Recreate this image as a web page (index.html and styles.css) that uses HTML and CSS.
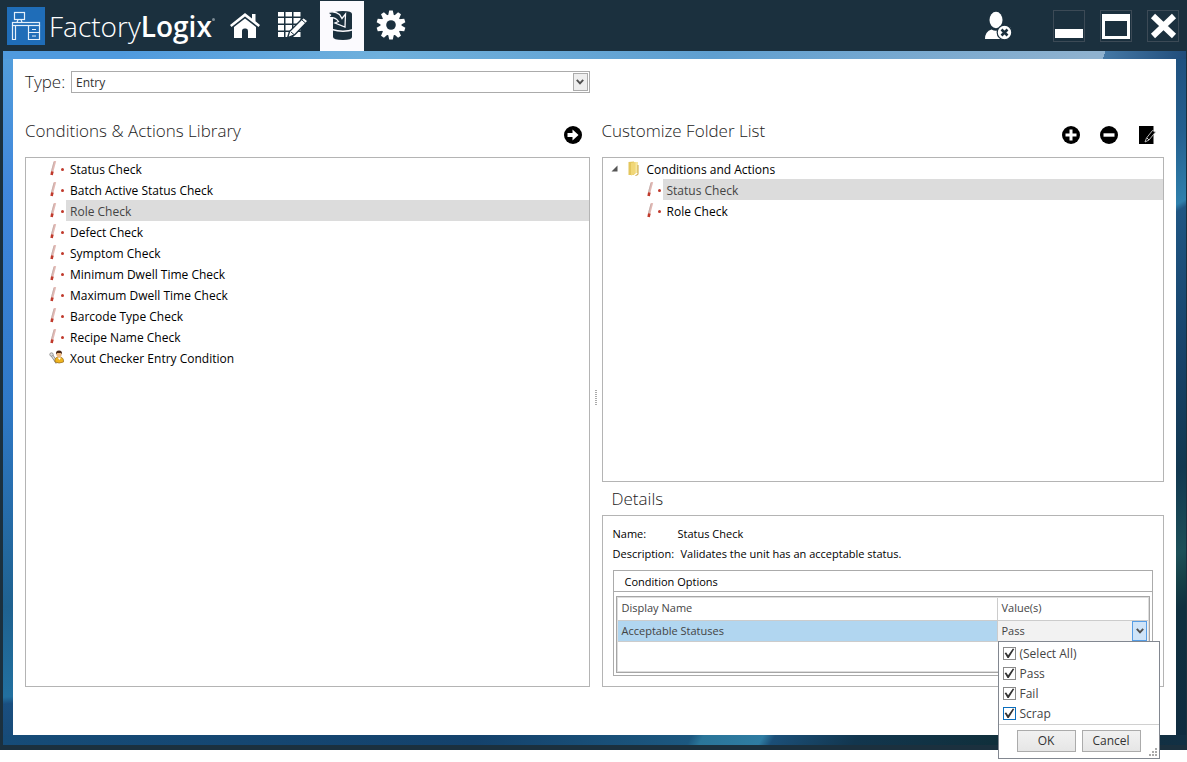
FILE: index.html
```html
<!DOCTYPE html>
<html lang="en">

<head>

    <meta charset="utf-8">
    <meta name="viewport" content="width=device-width, initial-scale=1.0">

    <title>FactoryLogix</title>

    <link rel="stylesheet" href="styles.css">

</head>

<body>

    <!-- shared icons -->
    <svg width="0" height="0" class="defs">
        <symbol id="check-icon" viewBox="0 0 16 16">
            <path d="M6 0L2.8 12" stroke="#e3b9b4" stroke-width="2.4"/>
            <path d="M5 1L2.5 10" stroke="#b9aaa8" stroke-width=".7"/>
            <path d="M3.4 10.500L2.600 14" stroke="#c0392b" stroke-width="2.6"/>
            <circle cx="13.5" cy="8.500" r="1.5" fill="#c0392b"/>
        </symbol>
        <symbol id="arrow-down" viewBox="0 0 8 6">
            <path d="M.8 .8L4 4.4L7.2 .8" fill="none" stroke="#505050" stroke-width="1.9"/>
        </symbol>
    </svg>

    <div class="app">

        <header class="topbar">
            <svg class="logo" viewBox="0 0 38 38">
                <rect width="38" height="38" fill="#1f6db8"/>
                <g fill="none" stroke="#e4f0fa" stroke-width="1.2">
                    <rect x="7.5" y="5.5" width="10" height="7"/>
                    <path d="M11 12.5L10 15.500H15L14 12.500"/>
                    <rect x="5.500" y="15.500" width="27" height="3"/>
                    <path d="M5.500 18.500V32.500H8.500V18.500M21.500 18.500V32.500H32.500V18.500M21.500 25.500H32.500"/>
                    <path d="M25 22.500H29M25 29H29"/>
                </g>
            </svg>
            <span class="brand">Factory<b>Logix</b><i></i></span>

            <nav class="tabs">
                <button type="button" class="tab" aria-label="Home">
                    <svg width="32" height="32" viewBox="0 0 32 32" fill="#fff">
                        <path d="M17 4L2 16L3.500 18L17 7.500L30.500 18L32 16L27.500 12.300V5H24V9.500Z"/>
                        <path d="M17 9.500L6 18V29H14V22Q14 19.500 16.500 19.500H18Q20 19.500 20 22V29H28V18Z"/>
                    </svg>
                </button>
                <button type="button" class="tab" aria-label="Edit table">
                    <svg width="32" height="32" viewBox="0 0 32 32">
                        <g fill="#fff">
                            <path d="M1 3H7V7.500H1ZM8.500 3H15V7.500H8.500ZM16.500 3H23.500V7.500H16.500Z"/>
                            <path d="M1 9H7V14.500H1ZM8.500 9H15V14.500H8.500ZM16.500 9H23.500V14.500H16.500Z"/>
                            <path d="M1 16H7V21.500H1ZM8.500 16H15V21.500H8.500ZM16.500 16H23.500V21.500H16.500Z"/>
                            <path d="M1 23H7V28H1ZM8.500 23H15V28H8.500ZM16.500 23H23.500V28H16.500Z"/>
                        </g>
                        <path d="M26.500 8.500L31 12L17.500 26L10.500 29L12.500 22.500Z" fill="#fff" stroke="#1b303e" stroke-width="1.4"/>
                        <path d="M25 11L28.500 14M14 23L17 25.500" stroke="#1b303e" stroke-width="1"/>
                    </svg>
                </button>
                <button type="button" class="tab active" aria-label="Library">
                    <svg width="32" height="32" viewBox="0 0 32 32">
                        <path d="M7 5Q7 2 17 2Q26 2 26 5V28Q26 31 17 31Q7 31 7 28Z" fill="#1b303e"/>
                        <path d="M6 20.500Q17 24 28 20.500" fill="none" stroke="#fbfafe" stroke-width="1.600"/>
                        <path d="M1.500 3.500Q9 1.500 13.500 5.500L16 9.500L19.500 5L19 18L9 14L12.500 12.500Q9.500 8 2.500 8.500L4.500 6Z" fill="#1b303e" stroke="#fbfafe" stroke-width="1.300"/>
                    </svg>
                </button>
                <button type="button" class="tab" aria-label="Settings">
                    <svg width="32" height="32" viewBox="-16 -16 32 32">
                        <g fill="#fff">
                            <circle r="10.500"/>
                            <path d="M-3 -9L-1.800 -14.500H1.800L3 -9ZM-3 9L-1.800 14.500H1.800L3 9Z"/>
                            <path d="M-3 -9L-1.800 -14.500H1.800L3 -9ZM-3 9L-1.800 14.500H1.800L3 9Z" transform="rotate(36)"/>
                            <path d="M-3 -9L-1.800 -14.500H1.800L3 -9ZM-3 9L-1.800 14.500H1.800L3 9Z" transform="rotate(72)"/>
                            <path d="M-3 -9L-1.800 -14.500H1.800L3 -9ZM-3 9L-1.800 14.500H1.800L3 9Z" transform="rotate(108)"/>
                            <path d="M-3 -9L-1.800 -14.500H1.800L3 -9ZM-3 9L-1.800 14.500H1.800L3 9Z" transform="rotate(144)"/>
                        </g>
                        <circle r="4.800" fill="#1b303e"/>
                    </svg>
                </button>
            </nav>

            <button type="button" class="user" aria-label="Log out">
                <svg width="28" height="30" viewBox="0 0 28 30">
                    <ellipse cx="11" cy="9" rx="6.500" ry="8.300" fill="#fff"/>
                    <path d="M0 28Q0 20.500 6.500 18.500Q11 21 15 18.500L20 28Z" fill="#fff"/>
                    <circle cx="19.500" cy="21.500" r="7.300" fill="#fff" stroke="#1b303e" stroke-width="1.200"/>
                    <path d="M16.500 18.500L22.500 24.500M22.500 18.500L16.500 24.500" stroke="#1b303e" stroke-width="2.600"/>
                </svg>
            </button>
            <div class="window-buttons">
                <button type="button" aria-label="Minimize">
                    <svg viewBox="0 0 30 30"><rect x="1" y="18" width="28" height="9" fill="#fff"/></svg>
                </button>
                <button type="button" aria-label="Maximize">
                    <svg viewBox="0 0 30 30"><path d="M1 3H29V28H1ZM4 10V25H26V10Z" fill="#fff" fill-rule="evenodd"/></svg>
                </button>
                <button type="button" aria-label="Close">
                    <svg viewBox="0 0 30 30"><path d="M5 5L26 25M26 5L5 25" stroke="#fff" stroke-width="6"/></svg>
                </button>
            </div>
        </header>

        <div class="desktop">
            <main class="page">

                <div class="type-row">
                    <label for="type">Type:</label>
                    <div class="select-box">
                        <select id="type">
                            <option>Entry</option>
                            <option>Exit</option>
                        </select>
                        <span class="select-arrow"><svg width="8" height="6"><use href="#arrow-down"/></svg></span>
                    </div>
                </div>

                <div class="columns">

                    <section class="library">
                        <div class="section-head">
                            <h2>Conditions &amp; Actions Library</h2>
                            <button type="button" class="round" aria-label="Add to folder">
                                <svg viewBox="0 0 18 18"><circle cx="9" cy="9" r="9"/><path d="M3.500 7H8.500V3.500L14.500 9L8.500 14.500V11H3.500Z" fill="#fff"/></svg>
                            </button>
                        </div>
                        <ul class="tree box">
                            <li><svg><use href="#check-icon"/></svg><span>Status Check</span></li>
                            <li><svg><use href="#check-icon"/></svg><span>Batch Active Status Check</span></li>
                            <li class="selected"><svg><use href="#check-icon"/></svg><span>Role Check</span></li>
                            <li><svg><use href="#check-icon"/></svg><span>Defect Check</span></li>
                            <li><svg><use href="#check-icon"/></svg><span>Symptom Check</span></li>
                            <li><svg><use href="#check-icon"/></svg><span>Minimum Dwell Time Check</span></li>
                            <li><svg><use href="#check-icon"/></svg><span>Maximum Dwell Time Check</span></li>
                            <li><svg><use href="#check-icon"/></svg><span>Barcode Type Check</span></li>
                            <li><svg><use href="#check-icon"/></svg><span>Recipe Name Check</span></li>
                            <li>
                                <svg viewBox="0 0 16 16">
                                    <path d="M2 4L8 13" stroke="#8d8d8d" stroke-width="2.800"/>
                                    <path d="M2 4L8 13" stroke="#e6e6e6" stroke-width="1.200"/>
                                    <circle cx="2.500" cy="4.500" r="1.700" fill="#ddd" stroke="#888" stroke-width=".8"/>
                                    <path d="M6 12Q5 7 10 7Q15 7 14.500 12Q10 14 6 12Z" fill="#f0b51f" stroke="#93691a" stroke-width=".7"/>
                                    <path d="M8.500 7.500L10.500 10L12 7.500Z" fill="#fff"/>
                                    <circle cx="10" cy="4.500" r="2.600" fill="#edb77e"/>
                                    <path d="M7 4.500Q6.500 .5 10 .5Q13.500 .5 13 4.500L12 3H8.200Z" fill="#4a2817"/>
                                </svg>
                                <span>Xout Checker Entry Condition</span>
                            </li>
                        </ul>
                    </section>

                    <div class="splitter"><span></span></div>

                    <section class="folders">
                        <div class="section-head">
                            <h2>Customize Folder List</h2>
                            <div class="tools">
                                <button type="button" class="round" aria-label="Add">
                                    <svg viewBox="0 0 18 18"><circle cx="9" cy="9" r="9"/><path d="M9 3.500V14.500M3.500 9H14.500" stroke="#fff" stroke-width="3"/></svg>
                                </button>
                                <button type="button" class="round" aria-label="Remove">
                                    <svg viewBox="0 0 18 18"><circle cx="9" cy="9" r="9"/><path d="M3.500 9H14.500" stroke="#fff" stroke-width="3.400"/></svg>
                                </button>
                                <button type="button" class="round" aria-label="Edit">
                                    <svg viewBox="0 0 18 18"><path d="M1 0H15.500V18H1Z"/><path d="M14.500 4.500L17.500 6L11 14L7 16L8.500 12Z" stroke="#ccc" stroke-width=".9"/><path d="M9 12L11 14" stroke="#ccc"/></svg>
                                </button>
                            </div>
                        </div>
                        <ul class="tree folder-tree box">
                            <li class="root">
                                <svg class="expander" viewBox="0 0 7 7"><path d="M6.500 .5V6.500H.5Z" fill="#555"/></svg>
                                <svg viewBox="0 0 16 16">
                                    <path d="M2.500 1L8 .5V14H2.500Z" fill="#e3c65d"/>
                                    <path d="M8 1H12V12H8Z" fill="#f6e6a1"/>
                                    <path d="M5 2L9.500 1V13L5 14.500Z" fill="#f1d778"/>
                                    <path d="M12 4V13.500L9.500 14.500" fill="none" stroke="#c9a33c"/>
                                </svg>
                                <span>Conditions and Actions</span>
                            </li>
                            <li class="selected"><svg><use href="#check-icon"/></svg><span>Status Check</span></li>
                            <li><svg><use href="#check-icon"/></svg><span>Role Check</span></li>
                        </ul>

                        <h2 class="details-title">Details</h2>
                        <div class="details box">
                            <dl>
                                <dt>Name:</dt><dd>Status Check</dd>
                                <dt>Description:</dt><dd>Validates the unit has an acceptable status.</dd>
                            </dl>
                            <div class="options">
                                <h3>Condition Options</h3>
                                <div class="grid">
                                    <table>
                                        <thead>
                                            <tr><th>Display Name</th><th class="value">Value(s)</th></tr>
                                        </thead>
                                        <tbody>
                                            <tr>
                                                <td>Acceptable Statuses</td>
                                                <td class="value">
                                                    <div class="editor">
                                                        <span>Pass</span>
                                                        <button type="button" class="drop" aria-label="Open list"><svg width="8" height="6"><use href="#arrow-down"/></svg></button>
                                                        <form class="popup">
                                                            <label><input type="checkbox" checked>(Select All)</label>
                                                            <label><input type="checkbox" checked>Pass</label>
                                                            <label><input type="checkbox" checked>Fail</label>
                                                            <label><input type="checkbox" class="focused" checked>Scrap</label>
                                                            <div class="popup-buttons">
                                                                <button type="button">OK</button>
                                                                <button type="button">Cancel</button>
                                                                <svg class="grip" viewBox="0 0 8 8" fill="#aaa"><path d="M6 0H8V2H6ZM3 3H5V5H3ZM6 3H8V5H6ZM0 6H2V8H0ZM3 6H5V8H3ZM6 6H8V8H6Z"/></svg>
                                                            </div>
                                                        </form>
                                                    </div>
                                                </td>
                                            </tr>
                                        </tbody>
                                    </table>
                                </div>
                            </div>
                        </div>
                    </section>

                </div>

            </main>
        </div>

    </div>

</body>

</html>
```

FILE: styles.css
```css
* {
    box-sizing: border-box;
}

body {
    font-family: "Open Sans", "Noto Sans", sans-serif;
    font-size: 12px;
    color: #000;
    background-color: #fff;
    min-height: 100vh;
    margin: 0;
    padding-bottom: 12px;
}

button {
    font-family: inherit;
    padding: 0;
    border: none;
    background: none;
    cursor: pointer;
}

svg {
    display: block;
    flex: none;
}

h2 {
    font-size: 17px;
    font-weight: 300;
    line-height: 24px;
    color: #222;
    margin: 0;
}

.defs {
    position: absolute;
}

.app {
    display: flex;
    flex-direction: column;
    min-height: calc(100vh - 12px);
    padding: 0 1px 5px 3px;
    background-color: #1b303e;
}

/* top bar */
.topbar {
    display: flex;
    align-items: center;
    height: 51px;
    padding: 0 7px 0 4px;
}

.logo {
    width: 38px;
    height: 38px;
}

.brand {
    position: relative;
    width: 171px;
    margin-left: 4px;
    font-size: 28px;
    font-weight: 300;
    line-height: 36px;
    color: #fff;
    white-space: nowrap;
}

.brand b {
    font-weight: 600;
}

.brand i {
    position: absolute;
    top: 10px;
    right: 5px;
    width: 3px;
    height: 3px;
    border-radius: 50%;
    background-color: #7d8b95;
}

.tabs {
    display: flex;
    align-self: stretch;
    gap: 5px;
    padding-top: 1px;
    margin-left: 2px;
}

.tab {
    display: flex;
    align-items: center;
    justify-content: center;
    width: 44px;
}

.tab svg {
    margin-bottom: 3px;
}

.tab.active {
    background-color: #fbfafe;
}

.user {
    margin-left: auto;
}

.window-buttons {
    display: flex;
    gap: 15px;
    margin-left: 40px;
}

.window-buttons button {
    width: 32px;
    height: 32px;
    border: 1px solid #3c4a56;
}

/* wallpaper seen around the page */
.desktop {
    flex: 1;
    display: flex;
    padding: 8px 10px 10px;
    background:
        linear-gradient(105deg, #4f9ade, #4f9ade 10%, #6fb0dc 32%, #5f9fd0 60%, #8fb2cf 92%, #8fb2cf 93%, #4478a5 93%, #204c7a) top / 100% 8px no-repeat,
        linear-gradient(120deg, #164c78, #14426c 40%, #1c5880 58%, #2a7599 59%, #2f7ca2 64%, #1b4f78 65%, #12364e 72%, #102f3b 84%, #123044) bottom / 100% 10px no-repeat,
        linear-gradient(175deg, #539fdc, #3f86dc 20%, #2f79c8 50%, #1f6290 80%, #22709f 93%, #1a4f80 94%, #174a76) left / 10px 100% no-repeat,
        linear-gradient(150deg, #1f4f7d, #24608f 12%, #2f80ac 22%, #1f5683 23%, #174268 45%, #123850 60%, #1d5058 72%, #164047 76%, #10303f 80%, #0f2c40) right / 10px 100% no-repeat;
}

.page {
    flex: 1;
    display: flex;
    flex-direction: column;
    min-width: 0;
    padding: 12px 12px 48px;
    background-color: #fff;
}

.type-row {
    display: flex;
    align-items: center;
    width: calc(50% - 5px);
    height: 22px;
}

.type-row label {
    width: 46px;
    font-size: 17px;
    font-weight: 300;
    line-height: 22px;
    color: #222;
}

.select-box {
    position: relative;
    flex: 1;
}

.select-box select {
    display: block;
    width: 100%;
    height: 22px;
    padding: 0 4px;
    appearance: none;
    border: 1px solid #ababab;
    border-radius: 0;
    background-color: #fff;
    font-family: inherit;
    font-size: 12px;
    color: #333;
}

.select-arrow {
    position: absolute;
    top: 2px;
    right: 2px;
    display: flex;
    align-items: center;
    justify-content: center;
    width: 15px;
    height: 18px;
    border: 1px solid #ababab;
    background-color: #eee;
    pointer-events: none;
}

.columns {
    flex: 1;
    display: flex;
    margin-top: 26px;
}

.library,
.folders {
    display: flex;
    flex-direction: column;
    min-width: 0;
}

.library {
    width: calc(50% - 5px);
}

.folders {
    flex: 1;
}

.section-head {
    display: flex;
    justify-content: space-between;
    height: 38px;
    padding: 0 8px 0 0;
}

.round {
    width: 18px;
    height: 18px;
    margin-top: 7px;
}

.tools {
    display: flex;
    gap: 20px;
}

.box {
    border: 1px solid #b4b4b4;
}

.splitter {
    display: flex;
    align-items: center;
    justify-content: center;
    width: 12px;
}

.splitter span {
    width: 2px;
    height: 15px;
    margin-bottom: 12px;
    background: repeating-linear-gradient(#aaa 0 1px, #fff 1px 2px);
}

/* lists */
.tree {
    flex: 1;
    list-style: none;
    margin: 0;
    padding: 0;
}

.tree li {
    display: flex;
    align-items: center;
    height: 21px;
    padding-left: 23px;
}

.tree li svg {
    width: 16px;
    height: 16px;
}

.tree span {
    flex: 1;
    margin-left: 1px;
    padding: 2px 0 0 4px;
    line-height: 19px;
}

.tree .selected span {
    background-color: #dcdcdc;
    color: #444;
}

.folder-tree li {
    padding-left: 43px;
}

.folder-tree .root {
    padding-left: 8px;
}

.tree .expander {
    width: 7px;
    height: 7px;
    margin-right: 8px;
}

/* details */
.details-title {
    margin: 5px 0 4px 10px;
}

.details {
    height: 172px;
    padding: 8px 10px;
    font-size: 11px;
}

dl {
    display: grid;
    grid-template-columns: 65px 1fr;
    line-height: 20px;
    margin: 0;
}

dt,
dd {
    margin: 0;
    white-space: nowrap;
}

dd:last-child {
    padding-left: 3px;
}

.options {
    height: 106px;
    margin-top: 6px;
    border: 1px solid #ababab;
}

.options h3 {
    height: 21px;
    margin: 0;
    padding-left: 11px;
    border-bottom: 1px solid #ababab;
    font-size: 11px;
    font-weight: 400;
    line-height: 21px;
}

.grid {
    height: 77px;
    margin: 4px 2px;
    border: 1px solid #a6a6a6;
    outline: 1px solid #ddd;
    outline-offset: -2px;
}

table {
    width: 100%;
    border-collapse: collapse;
    color: #444;
}

th,
td {
    padding: 0 0 0 5px;
    border-bottom: 1px solid #ccc;
    font-weight: 400;
    line-height: 20px;
    text-align: left;
}

th {
    height: 23px;
}

td {
    height: 21px;
    background-color: #b1d6f0;
}

.value {
    width: 152px;
    border-left: 1px solid #ccc;
    padding-left: 4px;
}

td.value {
    background-color: #f2f2f2;
}

.editor {
    position: relative;
    display: flex;
    justify-content: space-between;
    padding-right: 2px;
}

.drop {
    display: flex;
    align-items: center;
    justify-content: center;
    width: 15px;
    height: 20px;
    border: 1px solid #569de5;
    background-color: #cfe4f8;
}

.popup {
    position: absolute;
    top: 20px;
    left: -4px;
    width: 162px;
    padding-top: 2px;
    border: 1px solid #828790;
    background-color: #fff;
    font-size: 12px;
}

.popup label {
    display: flex;
    align-items: center;
    gap: 4px;
    height: 20px;
    padding-left: 4px;
}

.popup input {
    width: 13px;
    height: 13px;
    margin: 0;
    appearance: none;
    border: 1px solid #8a8a8a;
    background-color: #fff;
}

.popup input:checked::before {
    content: "";
    display: block;
    width: 11px;
    height: 11px;
    background-color: #333;
    clip-path: polygon(10% 45%, 25% 40%, 42% 65%, 85% 5%, 98% 8%, 48% 92%, 36% 92%);
}

.popup .focused {
    border-color: #0a6ebd;
}

.popup-buttons {
    position: relative;
    display: flex;
    justify-content: flex-end;
    gap: 6px;
    padding: 5px 18px 6px;
    border-top: 1px solid #d0d0d0;
}

.popup-buttons button {
    width: 59px;
    height: 22px;
    border: 1px solid #ababab;
    background: linear-gradient(#f1f1f1, #e6e6e6);
    font-size: 12px;
    color: #333;
}

.grip {
    position: absolute;
    right: 2px;
    bottom: 2px;
    width: 8px;
    height: 8px;
}
```
